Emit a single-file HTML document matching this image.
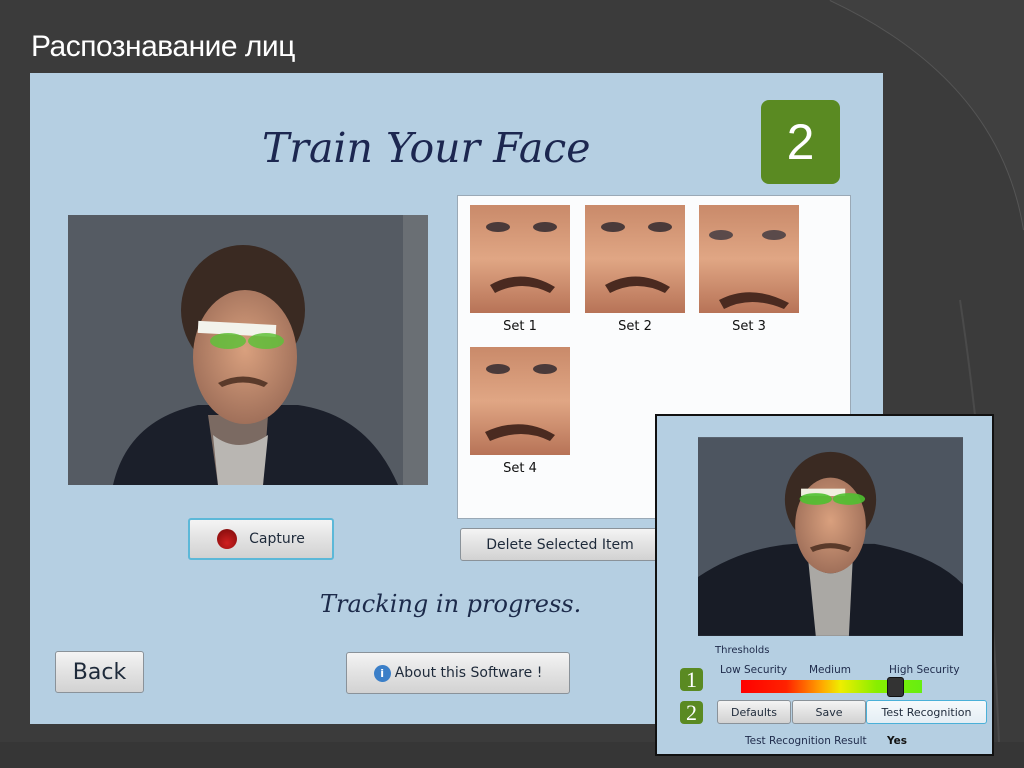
<!DOCTYPE html>
<html><head><meta charset="utf-8"><style>
*{margin:0;padding:0;box-sizing:border-box}
body{width:1024px;height:768px;overflow:hidden;background:#3b3b3b;font-family:"Liberation Sans",sans-serif;position:relative}
.abs{position:absolute}
.btn{position:absolute;border:1px solid #8a9299;border-radius:3px;background:linear-gradient(#f4f4f4,#e2e2e2 50%,#d2d2d2);color:#1e2a3a;font-family:"DejaVu Sans",sans-serif;display:flex;align-items:center;justify-content:center}
.thumb{position:absolute;width:100px;height:108px}
.lbl{position:absolute;font-family:"DejaVu Sans",sans-serif;font-size:13px;color:#111;width:100px;text-align:center}
</style></head><body>
<svg class="abs" style="left:0;top:0" width="1024" height="768">
<path d="M830 0 Q1000 80 1024 230" stroke="#555" stroke-width="2" fill="none"/>
<path d="M1024 0 L1024 230 Q1000 80 830 0Z" fill="#404040"/>
<path d="M960 300 Q990 500 1000 768" stroke="#4a4a4a" stroke-width="2" fill="none"/>
<path d="M0 742 L1024 742 L1024 768 L0 768Z" fill="#363636"/>
</svg>
<div class="abs" style="left:31px;top:30px;color:#fff;font-size:30px;letter-spacing:-0.5px">Распознавание лиц</div>
<div class="abs" style="left:30px;top:73px;width:853px;height:651px;background:#b5cfe2"></div>
<div class="abs" style="left:262px;top:124px;font-family:'DejaVu Serif',serif;font-style:italic;font-size:41px;color:#1c2750">Train Your Face</div>
<div class="abs" style="left:761px;top:100px;width:79px;height:84px;background:#5a8a22;border-radius:8px;color:#fff;font-size:50px;text-align:center;line-height:84px">2</div>

<svg class="abs" style="left:68px;top:215px" width="360" height="270" viewBox="0 0 360 270">
<defs><radialGradient id="fc" cx="50%" cy="45%" r="55%"><stop offset="0" stop-color="#d9a07e"/><stop offset="1" stop-color="#a0705a"/></radialGradient></defs>
<rect width="360" height="270" fill="#555b63"/>
<rect x="335" width="25" height="270" fill="#6a6f74"/>
<path d="M45 270 Q60 205 130 190 L230 190 Q300 200 330 270Z" fill="#1b1f2a"/>
<path d="M140 200 L200 200 L195 270 L150 270Z" fill="#7b6a62"/>
<path d="M145 220 Q170 240 200 220 L195 270 L150 270Z" fill="#b9b6b2"/>
<ellipse cx="175" cy="95" rx="62" ry="65" fill="#3a2a22"/>
<ellipse cx="177" cy="142" rx="52" ry="67" fill="url(#fc)"/>
<rect x="130" y="108" width="78" height="12" fill="#f3f3ec" transform="rotate(3 170 114)"/>
<ellipse cx="160" cy="126" rx="18" ry="8" fill="#5fc03a" opacity=".85"/>
<ellipse cx="198" cy="126" rx="18" ry="8" fill="#5fc03a" opacity=".85"/>
<path d="M150 168 Q175 155 200 168 L196 172 Q175 163 154 172Z" fill="#5a3a2a"/>
</svg>

<div class="abs" style="left:457px;top:195px;width:394px;height:324px;background:#fbfcfd;border:1px solid #9aa9b6"></div>
<svg width="0" height="0" style="position:absolute"><defs>
<linearGradient id="sk" x1="0" y1="0" x2="0" y2="1"><stop offset="0" stop-color="#c98a6a"/><stop offset=".5" stop-color="#e0a684"/><stop offset="1" stop-color="#b77357"/></linearGradient></defs></svg>
<svg class="thumb" style="left:470px;top:205px" viewBox="0 0 100 108"><rect width="100" height="108" fill="url(#sk)"/><ellipse cx="28" cy="22" rx="12" ry="5" fill="#4a3a3a"/><ellipse cx="75" cy="22" rx="12" ry="5" fill="#4a3a3a"/><path d="M20 80 Q52 62 85 82 L80 88 Q52 74 25 88Z" fill="#4a2a20"/></svg>
<svg class="thumb" style="left:585px;top:205px" viewBox="0 0 100 108"><rect width="100" height="108" fill="url(#sk)"/><ellipse cx="28" cy="22" rx="12" ry="5" fill="#4a3a3a"/><ellipse cx="75" cy="22" rx="12" ry="5" fill="#4a3a3a"/><path d="M20 80 Q52 62 85 82 L80 88 Q52 74 25 88Z" fill="#4a2a20"/></svg>
<svg class="thumb" style="left:699px;top:205px" viewBox="0 0 100 108"><rect width="100" height="108" fill="url(#sk)"/><ellipse cx="22" cy="30" rx="12" ry="5" fill="#5a4a4a"/><ellipse cx="75" cy="30" rx="12" ry="5" fill="#5a4a4a"/><path d="M20 95 Q52 78 90 98 L85 104 Q52 90 25 104Z" fill="#4a2a20"/></svg>
<svg class="thumb" style="left:470px;top:347px" viewBox="0 0 100 108"><rect width="100" height="108" fill="url(#sk)"/><ellipse cx="28" cy="22" rx="12" ry="5" fill="#4a3a3a"/><ellipse cx="75" cy="22" rx="12" ry="5" fill="#4a3a3a"/><path d="M15 85 Q52 68 85 88 L80 94 Q52 80 20 94Z" fill="#4a2a20"/></svg>
<div class="lbl" style="left:470px;top:319px">Set 1</div>
<div class="lbl" style="left:585px;top:319px">Set 2</div>
<div class="lbl" style="left:699px;top:319px">Set 3</div>
<div class="lbl" style="left:470px;top:461px">Set 4</div>

<div class="btn" style="left:188px;top:518px;width:146px;height:42px;border:2px solid #5cb8d8;font-size:14px"><span style="width:20px;height:20px;border-radius:50%;background:radial-gradient(circle at 50% 70%,#d02020,#7a0a0a);margin-right:12px;display:inline-block"></span>Capture</div>
<div class="btn" style="left:460px;top:528px;width:200px;height:33px;font-size:14px">Delete Selected Item</div>
<div class="abs" style="left:320px;top:590px;font-family:'DejaVu Serif',serif;font-style:italic;font-size:24px;color:#1c2a4a">Tracking in progress.</div>
<div class="btn" style="left:55px;top:651px;width:89px;height:42px;font-size:22px">Back</div>
<div class="btn" style="left:346px;top:652px;width:224px;height:42px;font-size:14px"><span style="width:17px;height:17px;border-radius:50%;background:#3b7fc8;color:#fff;font-size:11px;font-weight:bold;line-height:17px;text-align:center;margin-right:4px;display:inline-block">i</span>About this Software !</div>

<div class="abs" style="left:655px;top:414px;width:339px;height:342px;background:#b5cfe2;border:2px solid #111"></div>
<svg class="abs" style="left:698px;top:437px" width="265" height="199" viewBox="0 0 360 270">
<defs><radialGradient id="fc2" cx="50%" cy="45%" r="55%"><stop offset="0" stop-color="#d9a07e"/><stop offset="1" stop-color="#a0705a"/></radialGradient></defs>
<rect width="360" height="270" fill="#4d5560"/>
<path d="M0 270 L0 190 Q60 150 130 145 L240 145 Q320 160 360 200 L360 270Z" fill="#181c26"/>
<path d="M150 170 Q180 200 210 170 L205 270 L160 270Z" fill="#aaa8a4"/>
<ellipse cx="180" cy="85" rx="62" ry="65" fill="#3a2a22"/>
<ellipse cx="180" cy="120" rx="48" ry="65" fill="url(#fc2)"/>
<rect x="140" y="70" width="60" height="10" fill="#f0eee0"/>
<ellipse cx="160" cy="84" rx="22" ry="8" fill="#4fc030" opacity=".9"/>
<ellipse cx="205" cy="84" rx="22" ry="8" fill="#4fc030" opacity=".9"/>
<path d="M152 150 Q180 138 208 150 L204 156 Q180 146 156 156Z" fill="#5a3a2a"/>
</svg>
<div class="abs" style="left:715px;top:645px;font-family:'DejaVu Sans',sans-serif;font-size:10px;color:#1e2a4a">Thresholds</div>
<div class="abs" style="left:720px;top:664px;font-family:'DejaVu Sans',sans-serif;font-size:10.5px;color:#1e2a4a">Low Security</div>
<div class="abs" style="left:809px;top:664px;font-family:'DejaVu Sans',sans-serif;font-size:10.5px;color:#1e2a4a">Medium</div>
<div class="abs" style="left:889px;top:664px;font-family:'DejaVu Sans',sans-serif;font-size:10.5px;color:#1e2a4a">High Security</div>
<div class="abs" style="left:680px;top:668px;width:23px;height:23px;background:#5a8a22;border-radius:4px;color:#fff;font-family:'Liberation Serif',serif;font-size:22px;text-align:center;line-height:23px">1</div>
<div class="abs" style="left:680px;top:701px;width:23px;height:23px;background:#5a8a22;border-radius:4px;color:#fff;font-family:'Liberation Serif',serif;font-size:22px;text-align:center;line-height:23px">2</div>
<div class="abs" style="left:741px;top:680px;width:181px;height:13px;background:linear-gradient(90deg,#f00 0%,#f20 25%,#fa0 45%,#ee0 55%,#8e0 75%,#6e1 100%)"></div>
<div class="abs" style="left:887px;top:677px;width:17px;height:20px;background:#333;border-radius:3px;border:1px solid #111"></div>
<div class="btn" style="left:717px;top:700px;width:74px;height:24px;font-size:11px">Defaults</div>
<div class="btn" style="left:792px;top:700px;width:74px;height:24px;font-size:11px">Save</div>
<div class="btn" style="left:866px;top:700px;width:121px;height:24px;font-size:11px;border:1px solid #4ab0d8;background:linear-gradient(#f6fafc,#e4eef4)">Test Recognition</div>
<div class="abs" style="left:745px;top:735px;font-family:'DejaVu Sans',sans-serif;font-size:10.5px;color:#1e2a4a">Test Recognition Result</div>
<div class="abs" style="left:887px;top:735px;font-family:'DejaVu Sans',sans-serif;font-size:10.5px;font-weight:bold;color:#111">Yes</div>
</body></html>
